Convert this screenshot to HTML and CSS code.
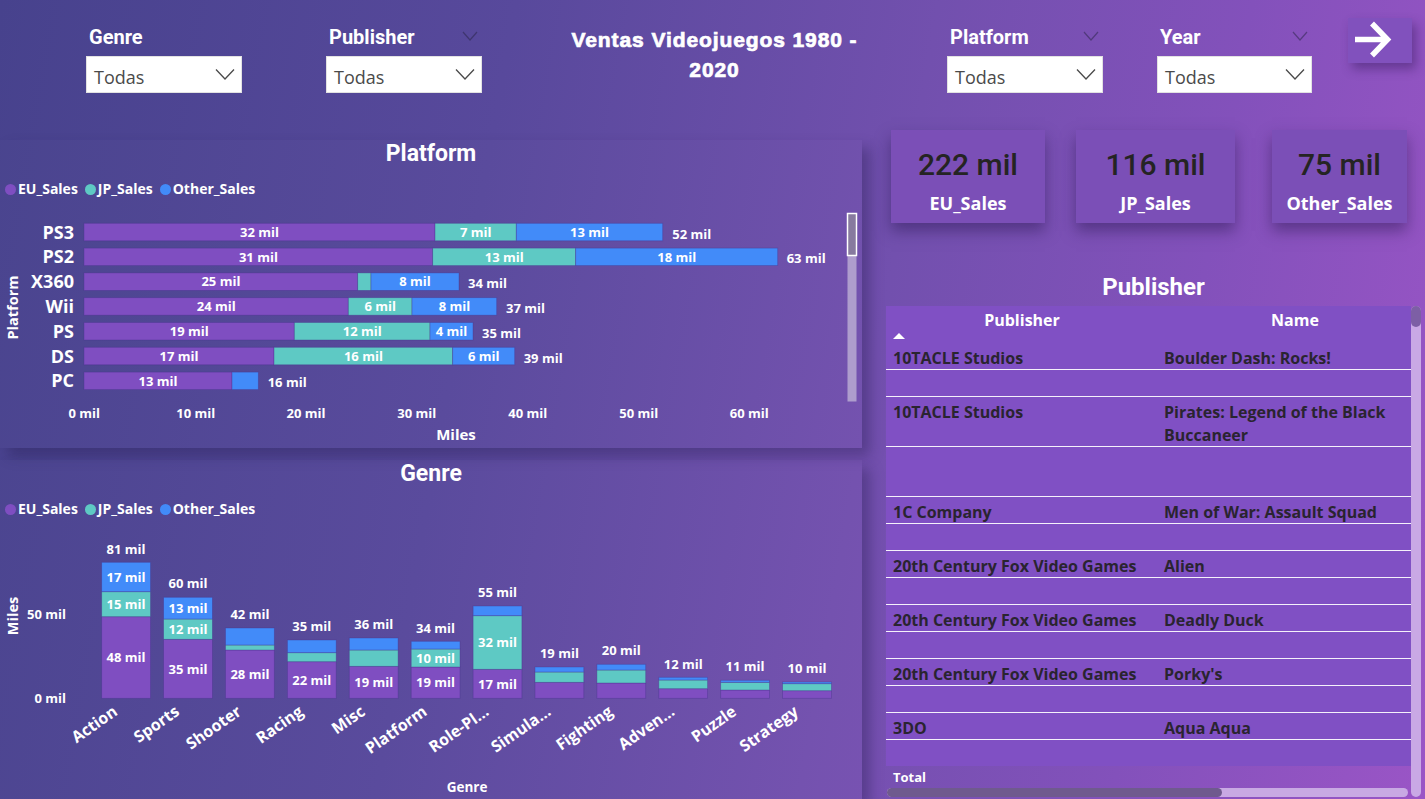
FILE: index.html
```html
<!DOCTYPE html>
<html lang="es">
<head>
<meta charset="utf-8">
<title>Ventas Videojuegos 1980 - 2020</title>
<link rel="stylesheet" href="styles.css">
</head>
<body>
<div class="page">
  <header class="topbar">
    <div class="slicer slicer--genre">
      <div class="slicer-head"><span class="slicer-title">Genre</span></div>
      <div class="slicer-box"><span class="slicer-value">Todas</span>
        <svg class="chev" viewBox="0 0 20 12"><polyline points="1,1.5 10,11 19,1.5"/></svg></div>
    </div>
    <div class="slicer slicer--publisher">
      <div class="slicer-head"><span class="slicer-title">Publisher</span>
        <svg class="head-chev" viewBox="0 0 16 10"><polyline points="1,1 8,9 15,1"/></svg></div>
      <div class="slicer-box"><span class="slicer-value">Todas</span>
        <svg class="chev" viewBox="0 0 20 12"><polyline points="1,1.5 10,11 19,1.5"/></svg></div>
    </div>
    <h1 class="report-title">Ventas Videojuegos 1980 -<br>2020</h1>
    <div class="slicer slicer--platform">
      <div class="slicer-head"><span class="slicer-title">Platform</span>
        <svg class="head-chev" viewBox="0 0 16 10"><polyline points="1,1 8,9 15,1"/></svg></div>
      <div class="slicer-box"><span class="slicer-value">Todas</span>
        <svg class="chev" viewBox="0 0 20 12"><polyline points="1,1.5 10,11 19,1.5"/></svg></div>
    </div>
    <div class="slicer slicer--year">
      <div class="slicer-head"><span class="slicer-title">Year</span>
        <svg class="head-chev" viewBox="0 0 16 10"><polyline points="1,1 8,9 15,1"/></svg></div>
      <div class="slicer-box"><span class="slicer-value">Todas</span>
        <svg class="chev" viewBox="0 0 20 12"><polyline points="1,1.5 10,11 19,1.5"/></svg></div>
    </div>
    <button class="nav-button" aria-label="Siguiente">
      <svg viewBox="0 0 64 45"><path d="M7 21.5H39M24 5.5L39.5 21.5L24 37.5"/></svg>
    </button>
  </header>

  <main class="content">
    <section class="left-col">
      <div class="panel panel--platform">
        <h2 class="panel-title">Platform</h2>
        <div class="legend">
          <span class="legend-item"><i class="dot dot--eu"></i>EU_Sales</span>
          <span class="legend-item"><i class="dot dot--jp"></i>JP_Sales</span>
          <span class="legend-item"><i class="dot dot--other"></i>Other_Sales</span>
        </div>
        <svg class="chart chart--platform" viewBox="0 199 862 249" width="862" height="249">
          <g class="ylab">
            <text x="74" y="238.5">PS3</text>
            <text x="74" y="263.3">PS2</text>
            <text x="74" y="288.1">X360</text>
            <text x="74" y="312.9">Wii</text>
            <text x="74" y="337.7">PS</text>
            <text x="74" y="362.5">DS</text>
            <text x="74" y="387.3">PC</text>
          </g>
          <text class="axis-title" transform="translate(12.5,307.5) rotate(-90)" x="0" y="5.2">Platform</text>
          <g class="bars">
            <rect class="eu" x="84" y="223.3" width="351" height="17.5"/>
            <rect class="jp" x="435" y="223.3" width="81.3" height="17.5"/>
            <rect class="ot" x="516.3" y="223.3" width="146.4" height="17.5"/>

            <rect class="eu" x="84" y="248.1" width="348.7" height="17.5"/>
            <rect class="jp" x="432.7" y="248.1" width="143" height="17.5"/>
            <rect class="ot" x="575.7" y="248.1" width="202" height="17.5"/>

            <rect class="eu" x="84" y="272.9" width="273.7" height="17.5"/>
            <rect class="jp" x="357.7" y="272.9" width="13.3" height="17.5"/>
            <rect class="ot" x="371" y="272.9" width="88" height="17.5"/>

            <rect class="eu" x="84" y="297.7" width="264.3" height="17.5"/>
            <rect class="jp" x="348.3" y="297.7" width="63.7" height="17.5"/>
            <rect class="ot" x="412" y="297.7" width="84.7" height="17.5"/>

            <rect class="eu" x="84" y="322.5" width="210.3" height="17.5"/>
            <rect class="jp" x="294.3" y="322.5" width="135.7" height="17.5"/>
            <rect class="ot" x="430" y="322.5" width="43" height="17.5"/>

            <rect class="eu" x="84" y="347.3" width="190" height="17.5"/>
            <rect class="jp" x="274" y="347.3" width="178.7" height="17.5"/>
            <rect class="ot" x="452.7" y="347.3" width="62" height="17.5"/>

            <rect class="eu" x="84" y="372.1" width="148" height="17.5"/>
            <rect class="ot" x="232" y="372.1" width="26.3" height="17.5"/>
          </g>
          <g class="dlab">
            <text x="259.5" y="236.7">32 mil</text><text x="475.7" y="236.7">7 mil</text><text x="589.5" y="236.7">13 mil</text>
            <text x="258.4" y="261.5">31 mil</text><text x="504.2" y="261.5">13 mil</text><text x="676.7" y="261.5">18 mil</text>
            <text x="220.9" y="286.3">25 mil</text><text x="415" y="286.3">8 mil</text>
            <text x="216.2" y="311.1">24 mil</text><text x="380.2" y="311.1">6 mil</text><text x="454.4" y="311.1">8 mil</text>
            <text x="189.2" y="335.9">19 mil</text><text x="362.2" y="335.9">12 mil</text><text x="451.5" y="335.9">4 mil</text>
            <text x="179" y="360.7">17 mil</text><text x="363.4" y="360.7">16 mil</text><text x="483.7" y="360.7">6 mil</text>
            <text x="158" y="385.5">13 mil</text>
          </g>
          <g class="tlab">
            <text x="672.3" y="238.5">52 mil</text>
            <text x="786.7" y="263.3">63 mil</text>
            <text x="468" y="288.1">34 mil</text>
            <text x="506" y="312.9">37 mil</text>
            <text x="482" y="337.7">35 mil</text>
            <text x="523.7" y="362.5">39 mil</text>
            <text x="267.7" y="387.3">16 mil</text>
          </g>
          <g class="xlab">
            <text x="84.3" y="417.7">0 mil</text>
            <text x="195.7" y="417.7">10 mil</text>
            <text x="306" y="417.7">20 mil</text>
            <text x="416.7" y="417.7">30 mil</text>
            <text x="527.7" y="417.7">40 mil</text>
            <text x="638.7" y="417.7">50 mil</text>
            <text x="749.3" y="417.7">60 mil</text>
          </g>
          <text class="axis-title axis-title--x" x="456" y="440.4">Miles</text>
          <rect class="scroll-track" x="847.5" y="213" width="9" height="188.5"/>
          <rect class="scroll-thumb" x="847.5" y="213.5" width="9" height="42"/>
        </svg>
      </div>

      <div class="panel panel--genre">
        <h2 class="panel-title">Genre</h2>
        <div class="legend">
          <span class="legend-item"><i class="dot dot--eu"></i>EU_Sales</span>
          <span class="legend-item"><i class="dot dot--jp"></i>JP_Sales</span>
          <span class="legend-item"><i class="dot dot--other"></i>Other_Sales</span>
        </div>
        <svg class="chart chart--genre" viewBox="0 519 862 280" width="862" height="280">
          <g class="ylab ylab--small">
            <text x="66" y="619">50 mil</text>
            <text x="66" y="703">0 mil</text>
          </g>
          <text class="axis-title" transform="translate(12.7,616) rotate(-90)" x="0" y="5.4">Miles</text>
          <g class="bars">
            <rect class="eu" x="101.7" y="616.7" width="48.8" height="81.6"/>
            <rect class="jp" x="101.7" y="591.7" width="48.8" height="25"/>
            <rect class="ot" x="101.7" y="562.3" width="48.8" height="29.4"/>

            <rect class="eu" x="163.6" y="639.3" width="48.8" height="59"/>
            <rect class="jp" x="163.6" y="619" width="48.8" height="20.3"/>
            <rect class="ot" x="163.6" y="597.3" width="48.8" height="21.7"/>

            <rect class="eu" x="225.5" y="650" width="48.8" height="48.3"/>
            <rect class="jp" x="225.5" y="645" width="48.8" height="5"/>
            <rect class="ot" x="225.5" y="628" width="48.8" height="17"/>

            <rect class="eu" x="287.4" y="661.7" width="48.8" height="36.6"/>
            <rect class="jp" x="287.4" y="652.7" width="48.8" height="9"/>
            <rect class="ot" x="287.4" y="640" width="48.8" height="12.7"/>

            <rect class="eu" x="349.3" y="666.3" width="48.8" height="32"/>
            <rect class="jp" x="349.3" y="650" width="48.8" height="16.3"/>
            <rect class="ot" x="349.3" y="638" width="48.8" height="12"/>

            <rect class="eu" x="411.2" y="667" width="48.8" height="31.3"/>
            <rect class="jp" x="411.2" y="649" width="48.8" height="18"/>
            <rect class="ot" x="411.2" y="641.3" width="48.8" height="7.7"/>

            <rect class="eu" x="473.1" y="669.3" width="48.8" height="29"/>
            <rect class="jp" x="473.1" y="615.7" width="48.8" height="53.6"/>
            <rect class="ot" x="473.1" y="606" width="48.8" height="9.7"/>

            <rect class="eu" x="535" y="682.3" width="48.8" height="16"/>
            <rect class="jp" x="535" y="672" width="48.8" height="10.3"/>
            <rect class="ot" x="535" y="667" width="48.8" height="5"/>

            <rect class="eu" x="596.9" y="683" width="48.8" height="15.3"/>
            <rect class="jp" x="596.9" y="670" width="48.8" height="13"/>
            <rect class="ot" x="596.9" y="664.3" width="48.8" height="5.7"/>

            <rect class="eu" x="658.8" y="688.7" width="48.8" height="9.6"/>
            <rect class="jp" x="658.8" y="680" width="48.8" height="8.7"/>
            <rect class="ot" x="658.8" y="677.3" width="48.8" height="2.7"/>

            <rect class="eu" x="720.7" y="690" width="48.8" height="8.3"/>
            <rect class="jp" x="720.7" y="682.3" width="48.8" height="7.7"/>
            <rect class="ot" x="720.7" y="680.3" width="48.8" height="2"/>

            <rect class="eu" x="782.6" y="690.7" width="48.8" height="7.6"/>
            <rect class="jp" x="782.6" y="683.7" width="48.8" height="7"/>
            <rect class="ot" x="782.6" y="682" width="48.8" height="1.7"/>
          </g>
          <g class="dlab">
            <text x="126.1" y="582">17 mil</text><text x="126.1" y="609">15 mil</text><text x="126.1" y="662">48 mil</text>
            <text x="188" y="613">13 mil</text><text x="188" y="634">12 mil</text><text x="188" y="674">35 mil</text>
            <text x="249.9" y="679">28 mil</text>
            <text x="311.8" y="685">22 mil</text>
            <text x="373.7" y="686.7">19 mil</text>
            <text x="435.6" y="662.7">10 mil</text><text x="435.6" y="686.7">19 mil</text>
            <text x="497.5" y="647">32 mil</text><text x="497.5" y="689">17 mil</text>
          </g>
          <g class="dlab dlab--total">
            <text x="126.1" y="554">81 mil</text>
            <text x="188" y="588">60 mil</text>
            <text x="249.9" y="619">42 mil</text>
            <text x="311.8" y="630.7">35 mil</text>
            <text x="373.7" y="629">36 mil</text>
            <text x="435.6" y="632.7">34 mil</text>
            <text x="497.5" y="597">55 mil</text>
            <text x="559.4" y="658">19 mil</text>
            <text x="621.3" y="655">20 mil</text>
            <text x="683.2" y="669">12 mil</text>
            <text x="745.1" y="671">11 mil</text>
            <text x="807" y="673">10 mil</text>
          </g>
          <g class="cat">
            <text transform="translate(118.6,714) rotate(-35)">Action</text>
            <text transform="translate(180.5,714) rotate(-35)">Sports</text>
            <text transform="translate(242.4,714) rotate(-35)">Shooter</text>
            <text transform="translate(304.3,714) rotate(-35)">Racing</text>
            <text transform="translate(366.2,714) rotate(-35)">Misc</text>
            <text transform="translate(428.1,714) rotate(-35)">Platform</text>
            <text transform="translate(490,714) rotate(-35)">Role-Pl...</text>
            <text transform="translate(551.9,714) rotate(-35)">Simula...</text>
            <text transform="translate(613.8,714) rotate(-35)">Fighting</text>
            <text transform="translate(675.7,714) rotate(-35)">Adven...</text>
            <text transform="translate(737.6,714) rotate(-35)">Puzzle</text>
            <text transform="translate(799.5,714) rotate(-35)">Strategy</text>
          </g>
          <text class="axis-title axis-title--genre" x="467" y="792">Genre</text>
        </svg>
      </div>
    </section>

    <aside class="right-col">
      <div class="kpis">
        <div class="kpi kpi--eu"><div class="kpi-value">222 mil</div><div class="kpi-label">EU_Sales</div></div>
        <div class="kpi kpi--jp"><div class="kpi-value">116 mil</div><div class="kpi-label">JP_Sales</div></div>
        <div class="kpi kpi--other"><div class="kpi-value">75 mil</div><div class="kpi-label">Other_Sales</div></div>
      </div>
      <h2 class="table-title">Publisher</h2>
      <div class="table">
        <div class="table-main">
          <div class="thead">
            <div class="th th--first"><span>Publisher</span><i class="sort-up"></i></div>
            <div class="th"><span>Name</span></div>
          </div>
          <div class="tbody">
            <div class="trow"><span>10TACLE Studios</span><span>Boulder Dash: Rocks!</span></div>
            <div class="trow trow--blank"></div>
            <div class="trow trow--double"><span>10TACLE Studios</span><span>Pirates: Legend of the Black<br>Buccaneer</span></div>
            <div class="trow trow--blank trow--double"></div>
            <div class="trow"><span>1C Company</span><span>Men of War: Assault Squad</span></div>
            <div class="trow trow--blank"></div>
            <div class="trow"><span>20th Century Fox Video Games</span><span>Alien</span></div>
            <div class="trow trow--blank"></div>
            <div class="trow"><span>20th Century Fox Video Games</span><span>Deadly Duck</span></div>
            <div class="trow trow--blank"></div>
            <div class="trow"><span>20th Century Fox Video Games</span><span>Porky's</span></div>
            <div class="trow trow--blank"></div>
            <div class="trow"><span>3DO</span><span>Aqua Aqua</span></div>
            <div class="trow trow--rest"></div>
          </div>
          <div class="ttotal">Total</div>
          <div class="hscroll"><div class="hscroll-thumb"></div></div>
        </div>
        <div class="vscroll"><div class="vscroll-thumb"></div></div>
      </div>
    </aside>
  </main>
</div>
</body>
</html>
```

FILE: styles.css
```css
:root {
  --eu: #7f4ec1;
  --jp: #5ec9c4;
  --other: #428bf9;
  --table-bg: #8050c4;
}

* { box-sizing: border-box; }

html, body {
  margin: 0;
  padding: 0;
}

body {
  width: 1425px;
  height: 799px;
  overflow: hidden;
  background: linear-gradient(100deg, #47428d 0%, #58499c 33%, #7250ae 60%, #8351bb 80%, #9a55c6 100%);
  font-family: "Open Sans", "Noto Sans", sans-serif;
  color: #fff;
}

.page {
  width: 1425px;
  height: 799px;
  display: flex;
  flex-direction: column;
}

/* ---------- top bar ---------- */
.topbar {
  display: flex;
  align-items: flex-start;
  height: 100px;
  padding-left: 86px;
  flex: none;
}

.slicer {
  width: 156px;
  margin-top: 24px;
}
.slicer--publisher { margin-left: 84px; }
.slicer--year { margin-left: 54px; width: 155px; }

.slicer-head {
  height: 26px;
  display: flex;
  align-items: center;
  justify-content: space-between;
  padding-left: 3px;
  padding-right: 4px;
}
.slicer-title {
  font-family: Roboto, "Noto Sans", sans-serif;
  font-weight: 700;
  font-size: 20px;
  line-height: 26px;
  color: #fff;
}
.head-chev {
  width: 16px;
  height: 10px;
  fill: none;
  stroke: rgba(40, 36, 70, 0.5);
  stroke-width: 1.2;
  margin-top: -2px;
}

.slicer-box {
  margin-top: 6px;
  height: 37px;
  background: #fff;
  border: 1px solid #e2e2e2;
  display: flex;
  align-items: center;
  justify-content: space-between;
  padding: 4px 6px 0 7px;
}
.slicer-value {
  font-size: 18px;
  color: #4a4a4a;
  line-height: 24px;
}
.chev {
  width: 20px;
  height: 12px;
  fill: none;
  stroke: #4a4a4a;
  stroke-width: 1.3;
  margin-top: -6px;
}

.report-title {
  width: 465px;
  margin: 25px 0 0;
  text-align: center;
  font-family: "Liberation Sans", Arial, sans-serif;
  font-weight: 700;
  font-size: 21px;
  line-height: 30px;
  letter-spacing: 0.9px;
  -webkit-text-stroke: 0.7px #fff;
  color: #fff;
}

.nav-button {
  margin-left: 36px;
  margin-top: 18px;
  width: 64px;
  height: 45px;
  padding: 0;
  border: none;
  background: #8151bd;
  box-shadow: 4px 6px 10px rgba(50, 25, 90, 0.45);
  cursor: pointer;
}
.nav-button svg {
  display: block;
  width: 64px;
  height: 45px;
  fill: none;
  stroke: #fff;
  stroke-width: 5.5;
}

/* ---------- content ---------- */
.content {
  flex: 1;
  display: grid;
  grid-template-columns: 862px 1fr;
}

.left-col {
  padding-top: 40px;
  display: flex;
  flex-direction: column;
  gap: 12px;
}

.panel {
  width: 862px;
  display: flex;
  flex-direction: column;
  background: rgba(255, 255, 255, 0.015);
  box-shadow: 8px 8px 12px rgba(35, 25, 75, 0.35);
}
.panel--platform { height: 308px; }
.panel--genre { height: 339px; }

.panel-title {
  margin: 0;
  height: 28px;
  line-height: 28px;
  text-align: center;
  font-family: Roboto, "Noto Sans", sans-serif;
  font-weight: 700;
  font-size: 23px;
  color: #fff;
}

.legend {
  margin-top: 11px;
  height: 20px;
  display: flex;
  align-items: center;
  padding-left: 5px;
  gap: 7px;
  font-weight: 700;
  font-size: 14px;
  line-height: 20px;
}
.legend-item {
  display: flex;
  align-items: center;
  gap: 2px;
}
.dot {
  width: 11px;
  height: 11px;
  border-radius: 50%;
  display: inline-block;
}
.dot--eu { background: var(--eu); }
.dot--jp { background: var(--jp); }
.dot--other { background: var(--other); }

.chart {
  display: block;
  flex: none;
  font-family: "Open Sans", "Noto Sans", sans-serif;
  font-weight: 700;
}
.chart text { fill: #fff; }

.bars rect { stroke: rgba(70, 50, 140, 0.45); stroke-width: 0.8; }
.bars .eu { fill: var(--eu); }
.bars .jp { fill: var(--jp); }
.bars .ot { fill: var(--other); }

.ylab text { font-size: 18px; text-anchor: end; }
.ylab--small text { font-size: 13px; }
.dlab text { font-size: 13px; text-anchor: middle; }
.tlab text { font-size: 13px; text-anchor: start; }
.xlab text { font-size: 13px; text-anchor: middle; }
.cat text { font-size: 16px; text-anchor: end; }

.axis-title { font-size: 14.5px; text-anchor: middle; }
.axis-title--x { font-size: 15px; }
.axis-title--genre { font-size: 13.5px; }

.scroll-track { fill: #ae9dcd; }
.scroll-thumb { fill: #877a9f; stroke: #fff; stroke-width: 1.5; }

/* ---------- right column ---------- */
.right-col {
  padding-left: 24px;
  padding-right: 4px;
  display: flex;
  flex-direction: column;
}

.kpis {
  margin-top: 30px;
  padding-left: 5px;
  display: grid;
  grid-template-columns: 154px 159px 141px;
  column-gap: 31px;
}
.kpi--other { margin-left: 6px; }

.kpi {
  height: 93px;
  background: #7b4fb7;
  box-shadow: 0 8px 14px rgba(45, 25, 85, 0.5);
  display: flex;
  flex-direction: column;
  align-items: center;
  padding-top: 17px;
}
.kpi-value {
  font-family: Roboto, "Noto Sans", sans-serif;
  font-weight: 500;
  font-size: 30px;
  line-height: 36px;
  color: #252423;
}
.kpi-label {
  margin-top: 8px;
  font-weight: 700;
  font-size: 18px;
  line-height: 24px;
  color: #fff;
}

.table-title {
  margin: 50px 0 0;
  height: 28px;
  line-height: 28px;
  text-align: center;
  font-family: Roboto, "Noto Sans", sans-serif;
  font-weight: 700;
  font-size: 24px;
  color: #fff;
}

.table {
  margin-top: 5px;
  height: 491px;
  width: 535px;
  display: flex;
}

.table-main {
  width: 525px;
  display: flex;
  flex-direction: column;
  overflow: hidden;
}

.thead {
  display: grid;
  grid-template-columns: 272px 274px;
  height: 37px;
  background: var(--table-bg);
  flex: none;
}
.th {
  display: flex;
  flex-direction: column;
  align-items: center;
  padding-top: 4px;
  font-weight: 700;
  font-size: 16px;
  line-height: 20px;
  color: #fff;
}
.th--first { align-items: stretch; }
.th--first span { text-align: center; }
.sort-up {
  margin: 3px 0 0 7px;
  width: 0;
  height: 0;
  border-left: 6px solid transparent;
  border-right: 6px solid transparent;
  border-bottom: 6px solid #fff;
}

.tbody {
  flex: 1;
  display: flex;
  flex-direction: column;
  background: var(--table-bg);
  overflow: hidden;
}

.trow {
  display: grid;
  grid-template-columns: 272px 274px;
  align-content: start;
  padding-top: 4px;
  line-height: 22px;
  height: 27px;
  border-bottom: 1px solid rgba(255, 255, 255, 0.92);
  font-weight: 700;
  font-size: 16px;
  color: #2a2430;
  flex: none;
}
.trow span:first-child { padding-left: 7px; white-space: nowrap; }
.trow span:last-child { padding-left: 6px; white-space: nowrap; }
.trow--double { height: 50px; line-height: 23px; }
.trow--rest { flex: 1; height: auto; border-bottom: none; }

.ttotal {
  height: 22px;
  line-height: 22px;
  padding-left: 7px;
  font-weight: 700;
  font-size: 13px;
  color: #fff;
  flex: none;
}

.hscroll {
  margin-left: 1px;
  width: 521px;
  height: 9px;
  border-radius: 5px;
  background: #c8a9e3;
  flex: none;
}
.hscroll-thumb {
  width: 335px;
  height: 9px;
  border-radius: 5px;
  background: #6f5a8e;
}

.vscroll {
  width: 10px;
  height: 491px;
  margin-left: 0;
  border-radius: 5px;
  background: #c9a8e5;
}
.vscroll-thumb {
  width: 10px;
  height: 21px;
  border-radius: 5px;
  background: #7d5fa5;
}
```
